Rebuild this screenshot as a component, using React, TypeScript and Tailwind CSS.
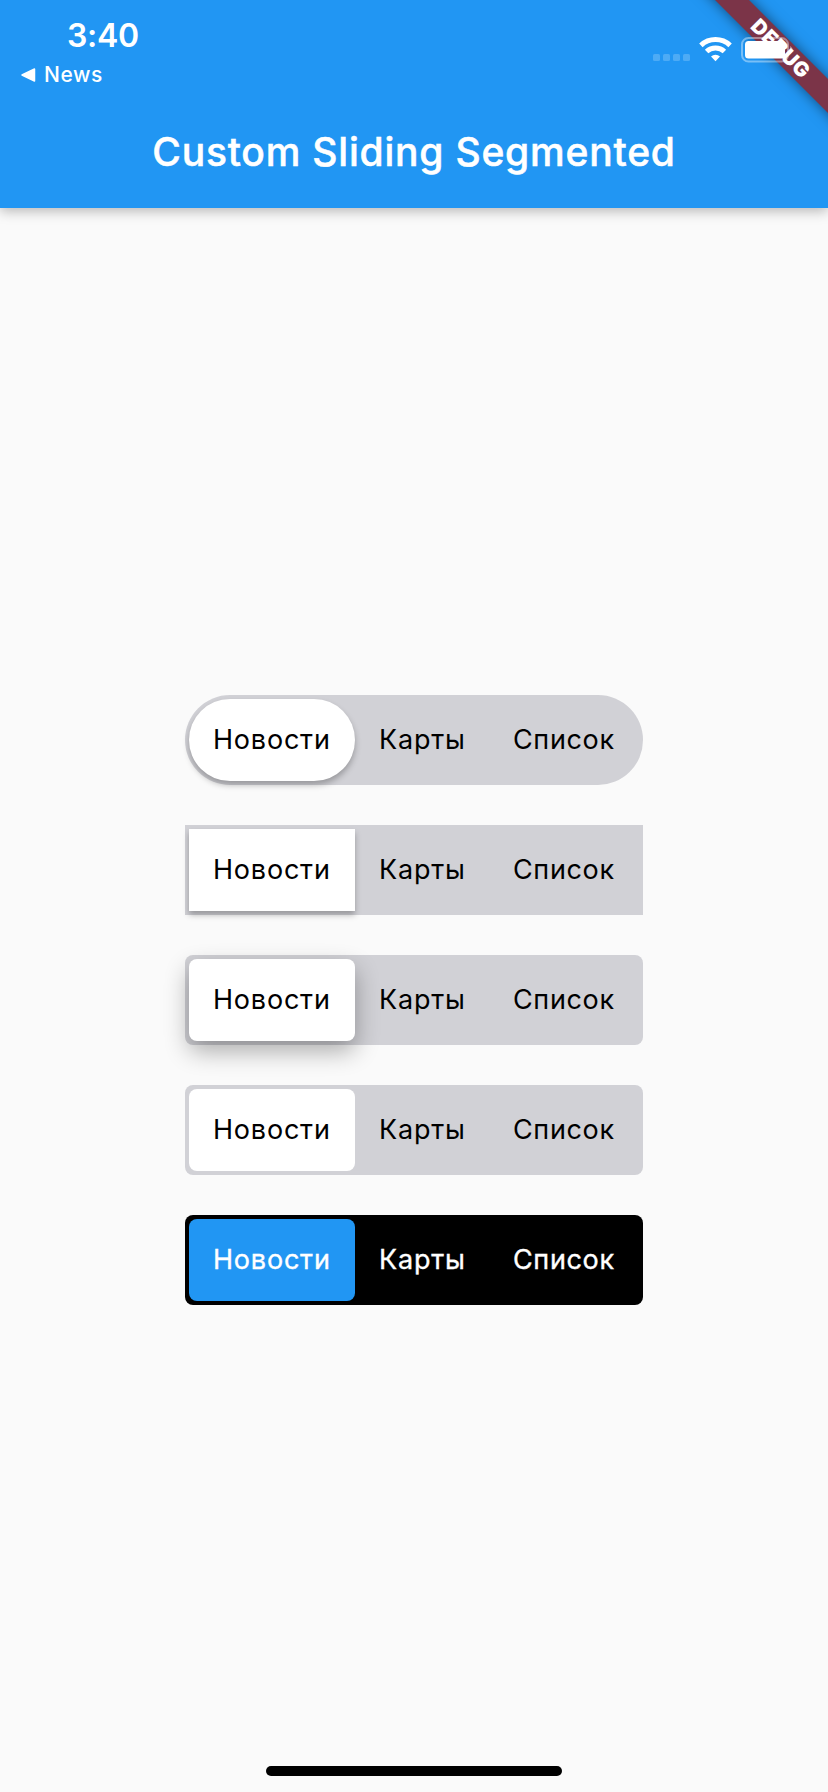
type Look = {
  id: string;
  track: string;
  thumb: string;
  text: string;
};

const looks: Look[] = [
  {
    id: "pill",
    track: "rounded-[45px] bg-[#d1d1d6]",
    thumb: "rounded-[41px] bg-white shadow-[0_4px_6px_rgba(0,0,0,0.27)]",
    text: "text-black",
  },
  {
    id: "square",
    track: "bg-[#d1d1d6]",
    thumb: "bg-white shadow-[0_4px_6px_rgba(0,0,0,0.27)]",
    text: "text-black",
  },
  {
    id: "raised",
    track: "rounded-lg bg-[#d1d1d6]",
    thumb: "rounded-lg bg-white shadow-[0_10px_24px_rgba(0,0,0,0.32)]",
    text: "text-black",
  },
  {
    id: "flat",
    track: "rounded-lg bg-[#d1d1d6]",
    thumb: "rounded-lg bg-white",
    text: "text-black",
  },
  {
    id: "dark",
    track: "rounded-lg bg-black",
    thumb: "rounded-lg bg-[#2196f3]",
    text: "text-white [-webkit-text-stroke:0.35px_white]",
  },
];

function SegmentedControl({ look }: { look: Look }) {
  return (
    <div
      className={`flex h-[90px] w-[458px] p-1 text-[27px] leading-[82px] tracking-[0.8px] ${look.track} ${look.text}`}
    >
      <button className={`h-[82px] w-[166px] pl-6 text-left ${look.thumb}`}>Новости</button>
      <button className="w-[134px] pl-6 text-left">Карты</button>
      <button className="flex-1 pl-6 text-left tracking-[0.65px]">Список</button>
    </div>
  );
}

function WifiIcon() {
  return (
    <svg width="33" height="26" viewBox="0 0 33 26" fill="none" stroke="#fff" strokeWidth="5">
      <path d="M1.9 9.35A21.4 21.4 0 0 1 31.1 9.35" />
      <path d="M7.6 15.5A13 13 0 0 1 25.4 15.5" />
      <path d="M16.5 25.2L12 20.6A6.4 6.4 0 0 1 21 20.6Z" fill="#fff" stroke="none" />
    </svg>
  );
}

function BatteryIcon() {
  return (
    <svg width="52" height="26" viewBox="0 0 52 26" fill="none">
      <rect x="1" y="1" width="46" height="23.5" rx="6.5" stroke="#fff" strokeOpacity="0.4" strokeWidth="2" />
      <rect x="4" y="4" width="40" height="17.5" rx="3.5" fill="#fff" />
      <path d="M49 9v8c1.6-.7 2.6-2.2 2.6-4s-1-3.3-2.6-4Z" fill="#fff" fillOpacity="0.4" />
    </svg>
  );
}

function StatusBar() {
  return (
    <div className="relative flex h-24 justify-between text-white">
      <div className="flex flex-col">
        <div className="mt-4 pl-[67px] text-[32px] leading-[40px] font-semibold tracking-[-0.3px]">3:40</div>
        <div className="mt-[5px] flex items-center pl-[21px] text-[21px] leading-[28px] font-medium tracking-[0.6px]">
          <svg width="15" height="14" viewBox="0 0 15 14" className="mr-2">
            <path d="M1 7L13.5 1V13Z" fill="#fff" stroke="#fff" strokeWidth="1.5" strokeLinejoin="round" />
          </svg>
          News
        </div>
      </div>
      <div className="flex items-start pt-9 pr-[35px]">
        <div className="mt-[18px] mr-[9px] flex gap-[3px]">
          <i className="size-[7px] rounded-[1.5px] bg-white/20" />
          <i className="size-[7px] rounded-[1.5px] bg-white/20" />
          <i className="size-[7px] rounded-[1.5px] bg-white/20" />
          <i className="size-[7px] rounded-[1.5px] bg-white/20" />
        </div>
        <WifiIcon />
        <div className="mt-px ml-[9px]">
          <BatteryIcon />
        </div>
      </div>
    </div>
  );
}

function DebugRibbon() {
  return (
    <div className="pointer-events-none absolute top-0 right-0 h-[200px] w-[200px] overflow-hidden">
      <div className="absolute top-[35.6px] left-[32.4px] flex h-6 w-[240px] rotate-45 items-center justify-center bg-[#7b3448] pl-[2px] text-[20.4px] leading-[24px] font-black tracking-[0.6px] text-white shadow-[0_0_14px_rgba(0,0,0,0.5)]">
        DEBUG
      </div>
    </div>
  );
}

export default function App() {
  return (
    <div className="relative flex h-[1792px] w-[828px] flex-col bg-[#fafafa] font-[Inter,sans-serif]">
      <header className="relative h-[208px] bg-[#2196f3] shadow-[0_3px_12px_rgba(0,0,0,0.28)]">
        <DebugRibbon />
        <StatusBar />
        <h1 className="flex h-28 items-center justify-center text-[39px] font-medium tracking-[0.79px] text-white [-webkit-text-stroke:0.5px_white]">
          Custom Sliding Segmented
        </h1>
      </header>
      <main className="flex flex-1 flex-col items-center justify-center gap-10">
        {looks.map((look) => (
          <SegmentedControl key={look.id} look={look} />
        ))}
      </main>
      <div className="absolute bottom-4 left-[266px] h-[10px] w-[296px] rounded-full bg-black" />
    </div>
  );
}
